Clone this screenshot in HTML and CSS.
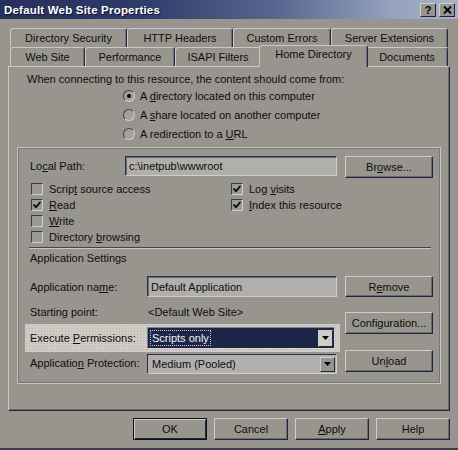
FILE: index.html
```html
<!DOCTYPE html>
<html>
<head>
<meta charset="utf-8">
<title>Default Web Site Properties</title>
<link rel="stylesheet" href="styles.css">
</head>
<body>
<div class="window">
  <div class="titlebar">
    <span class="title">Default Web Site Properties</span>
    <div class="tbtns">
      <span class="tbtn">?</span>
      <span class="tbtn"><svg width="9" height="8" viewBox="0 0 9 8"><path d="M1 0.5 L8 7.5 M8 0.5 L1 7.5" stroke="#000" stroke-width="1.8"/></svg></span>
    </div>
  </div>

  <div class="tabs">
    <div class="tabrow">
      <div class="tab w-ds">Directory Security</div>
      <div class="tab w-hh">HTTP Headers</div>
      <div class="tab w-ce">Custom Errors</div>
      <div class="tab w-se">Server Extensions</div>
    </div>
    <div class="tabrow">
      <div class="tab w-ws">Web Site</div>
      <div class="tab w-pf">Performance</div>
      <div class="tab w-if">ISAPI Filters</div>
      <div class="tab w-hd active">Home Directory</div>
      <div class="tab w-dc">Documents</div>
    </div>
  </div>

  <div class="panel">
    <div class="intro">When connecting to this resource, the content should come from:</div>
    <div class="radios">
      <div class="radio-row"><span class="radio on"></span><span>A <u>d</u>irectory located on this computer</span></div>
      <div class="radio-row"><span class="radio"></span><span>A <u>s</u>hare located on another computer</span></div>
      <div class="radio-row"><span class="radio"></span><span>A redirection to a <u>U</u>RL</span></div>
    </div>

    <div class="group">
      <div class="local-row">
        <span class="lbl-local">Lo<u>c</u>al Path:</span>
        <div class="field local-field">c:\inetpub\wwwroot</div>
        <div class="btn side-btn"><span>Br<u>o</u>wse...</span></div>
      </div>

      <div class="checks">
        <div class="chk-item"><span class="chk"></span><span>Scrip<u>t</u> source access</span></div>
        <div class="chk-item"><span class="chk on"><svg width="8" height="8" viewBox="0 0 8 8"><path d="M0.5 3.5 L3 6.2 L7.5 0.8" fill="none" stroke="#000" stroke-width="1.7"/></svg></span><span>Log <u>v</u>isits</span></div>
        <div class="chk-item"><span class="chk on"><svg width="8" height="8" viewBox="0 0 8 8"><path d="M0.5 3.5 L3 6.2 L7.5 0.8" fill="none" stroke="#000" stroke-width="1.7"/></svg></span><span><u>R</u>ead</span></div>
        <div class="chk-item"><span class="chk on"><svg width="8" height="8" viewBox="0 0 8 8"><path d="M0.5 3.5 L3 6.2 L7.5 0.8" fill="none" stroke="#000" stroke-width="1.7"/></svg></span><span><u>I</u>ndex this resource</span></div>
        <div class="chk-item"><span class="chk"></span><span><u>W</u>rite</span></div>
        <div class="chk-item"></div>
        <div class="chk-item"><span class="chk"></span><span>Directory <u>b</u>rowsing</span></div>
        <div class="chk-item"></div>
      </div>

      <div class="sep"></div>
      <div class="section-title">Application Settings</div>

      <div class="app-grid">
        <div class="g-label r1"><span>Application na<u>m</u>e:</span></div>
        <div class="field name-field r1">Default Application</div>
        <div class="btn side-btn g-btn r1"><span>R<u>e</u>move</span></div>

        <div class="g-label r2"><span>Starting point:</span></div>
        <div class="g-value r2"><span>&lt;Default Web Site&gt;</span></div>
        <div class="btn side-btn g-btn conf"><span>Configuration...</span></div>

        <div class="exec-row">
          <span class="exec-label">Execute <u>P</u>ermissions:</span>
          <div class="select exec-select">
            <span class="sel-text">Scripts only</span>
            <span class="arrow light"><svg width="7" height="4" viewBox="0 0 7 4"><path d="M0 0 H7 L3.5 4 Z" fill="#000"/></svg></span>
          </div>
        </div>

        <div class="g-label r4"><span>Applicatio<u>n</u> Protection:</span></div>
        <div class="select prot-select r4">
          <span class="sel-text">Medium (Pooled)</span>
          <span class="arrow"><svg width="7" height="4" viewBox="0 0 7 4"><path d="M0 0 H7 L3.5 4 Z" fill="#000"/></svg></span>
        </div>
        <div class="btn side-btn g-btn unload"><span>Un<u>l</u>oad</span></div>
      </div>
    </div>
  </div>

  <div class="actions">
    <div class="btn act default">OK</div>
    <div class="btn act">Cancel</div>
    <div class="btn act"><span><u>A</u>pply</span></div>
    <div class="btn act">Help</div>
  </div>
</div>
</body>
</html>
```

FILE: styles.css
```css
* { box-sizing: border-box; }
html, body { margin: 0; padding: 0; }
body {
  background: #98958f;
  font-family: "Liberation Sans", Arial, sans-serif;
  font-size: 11px;
  color: #0d0d0d;
}
u { text-decoration: underline; text-underline-offset: 1px; }

.window {
  width: 458px;
  height: 450px;
  display: flex;
  flex-direction: column;
  border-bottom: 2px solid #3a3d4c;
}

/* title bar */
.titlebar {
  height: 19px;
  flex: none;
  display: flex;
  align-items: center;
  justify-content: space-between;
  padding: 0 3px 0 4px;
  background: linear-gradient(90deg, #27305d 0%, #2f3a68 30%, #56668f 60%, #93a1bd 85%, #a9b4c9 100%);
}
.title {
  color: #fff;
  font-weight: bold;
  font-size: 11.5px;
  letter-spacing: 0.2px;
  text-shadow: 1px 1px 0 #0e1330;
}
.tbtns { display: flex; gap: 3px; }
.tbtn {
  width: 16px;
  height: 14px;
  background: #98958f;
  border: 1px solid;
  border-color: #d3d1cb #1c2240 #1c2240 #d3d1cb;
  display: flex;
  align-items: center;
  justify-content: center;
  font-weight: bold;
  font-size: 11px;
  line-height: 12px;
  color: #000;
}

/* tabs */
.tabs { margin-top: 9px; padding-left: 10px; flex: none; }
.tabrow { display: flex; height: 19px; align-items: flex-end; }
.tab {
  flex: none;
  height: 19px;
  border-top: 1px solid #cbc8c2;
  border-left: 1px solid #cbc8c2;
  border-right: 1px solid #232a4a;
  border-radius: 3px 3px 0 0;
  box-shadow: inset -1px 0 0 #6f6e6d;
  text-align: center;
  line-height: 19px;
  background: #98958f;
}
.w-ds { width: 117px; }
.w-hh { width: 106px; }
.w-ce { width: 98px; }
.w-se { width: 117px; }
.w-ws { width: 75px; }
.w-pf { width: 90px; }
.w-if { width: 86px; }
.w-hd { width: 105px; }
.w-dc { width: 82px; }
.tab.active {
  position: relative;
  z-index: 2;
  width: 109px;
  height: 22px;
  margin: 0 -2px -1px -2px;
  line-height: 17px;
}

/* panel */
.panel {
  flex: none;
  margin-left: 8px;
  width: 442px;
  height: 345px;
  border: 1px solid;
  border-color: #cdcac4 #1f2646 #1f2646 #cdcac4;
  box-shadow: inset -1px -1px 0 #6c6b6b;
  padding: 6px 8px 0 8px;
}
.intro { margin-left: 10px; line-height: 13px; height: 13px; }
.radios { margin-left: 106px; }
.radio-row { height: 19px; display: flex; align-items: center; gap: 5px; }
.radio {
  width: 12px;
  height: 12px;
  border-radius: 50%;
  border: 1px solid;
  border-color: #3a3e55 #d0cec8 #d0cec8 #3a3e55;
  background: #a3a19c;
  display: flex;
  align-items: center;
  justify-content: center;
  flex: none;
}
.radio.on::after {
  content: "";
  width: 4px;
  height: 4px;
  border-radius: 50%;
  background: #000;
}

/* group */
.group {
  margin-top: 4px;
  border: 1px solid #c6c4be;
  box-shadow: inset 1px 1px 0 #77767a, inset -1px -1px 0 #77767a;
  padding: 8px 7px 8px 12px;
  height: 237px;
}
.local-row { display: flex; align-items: flex-start; height: 22px; }
.lbl-local { width: 95px; line-height: 20px; }
.field {
  background: #b1afab;
  border: 1px solid;
  border-color: #283050 #d0cec8 #d0cec8 #283050;
  box-shadow: inset 1px 1px 0 #6b6a6a;
  padding-left: 3px;
  display: flex;
  align-items: center;
  white-space: nowrap;
}
.local-field { width: 212px; height: 20px; }
.btn {
  height: 22px;
  background: #98958f;
  border: 1px solid;
  border-color: #cfcdc7 #1f2646 #1f2646 #cfcdc7;
  box-shadow: inset -1px -1px 0 #6a6a6e;
  display: flex;
  align-items: center;
  justify-content: center;
  white-space: nowrap;
}
.side-btn { width: 88px; margin-left: 8px; }

.checks {
  margin-top: 3px;
  display: grid;
  grid-template-columns: 200px auto;
  grid-auto-rows: 16px;
}
.chk-item { display: flex; align-items: center; gap: 6px; padding-left: 1px; }
.chk {
  width: 12px;
  height: 12px;
  flex: none;
  border: 1px solid;
  border-color: #343a55 #d0cec8 #d0cec8 #343a55;
  background: #9c9a95;
  display: flex;
  align-items: center;
  justify-content: center;
}

.sep {
  margin: 2px 2px 0 -1px;
  height: 2px;
  border-top: 1px solid #3e425a;
  border-bottom: 1px solid #c9c7c1;
}
.section-title { margin-top: 2px; line-height: 14px; height: 14px; }

.app-grid {
  margin-top: 11px;
  display: grid;
  grid-template-columns: 117px 190px 96px;
  grid-template-rows: 22px 28px 24px 25px;
}
.g-label { grid-column: 1; display: flex; align-items: center; white-space: nowrap; }
.r1 { grid-row: 1; }
.r2 { grid-row: 2; }
.r4 { grid-row: 4; }
.name-field { grid-column: 2; height: 21px; }
.g-btn { grid-column: 3; }
.g-btn.r1 { height: 21px; }
.g-value { grid-column: 2; display: flex; align-items: center; padding-left: 1px; }
.conf { grid-row: 2 / 4; align-self: start; margin-top: 14px; }
.exec-row {
  grid-column: 1 / 3;
  grid-row: 3;
  margin: -2px -3px -2px -5px;
  padding: 3px 0 0 5px;
  display: flex;
  align-items: flex-start;
  background-color: #cfccc5;
  background-image: radial-gradient(circle, #b4b1aa 0.6px, transparent 0.9px);
  background-size: 3px 3px;
}
.exec-label { width: 117px; line-height: 22px; white-space: nowrap; }
.select {
  border: 1px solid;
  border-color: #283050 #d0cec8 #d0cec8 #283050;
  display: flex;
  align-items: center;
  justify-content: space-between;
  padding: 0 1px 0 4px;
  white-space: nowrap;
}
.exec-select {
  width: 188px;
  height: 22px;
  background: #1d2649;
  color: #f2f2f2;
  border-color: #7f8190 #d9d7d1 #d9d7d1 #7f8190;
  padding-left: 3px;
}
.exec-select .sel-text { outline: 1px dotted #c8c8c8; padding: 0 1px; line-height: 14px; }
.prot-select {
  grid-column: 2;
  width: 190px;
  height: 20px;
  align-self: start;
  margin-top: 4px;
  background: #b1afab;
}
.arrow {
  width: 15px;
  height: 15px;
  background: #98958f;
  border: 1px solid;
  border-color: #d0cec8 #1f2646 #1f2646 #d0cec8;
  display: flex;
  align-items: center;
  justify-content: center;
  flex: none;
}
.arrow.light { background: #d0cdc6; height: 17px; }
.unload { grid-row: 4; align-self: start; }

/* bottom buttons */
.actions {
  flex: none;
  display: flex;
  justify-content: flex-end;
  gap: 7px;
  margin-top: 7px;
  padding-right: 8px;
}
.act { width: 74px; height: 22px; }
.act.default { border: 1px solid #0d0f1c; box-shadow: inset 1px 1px 0 #cfcdc7, inset -1px -1px 0 #1f2646; }
```
